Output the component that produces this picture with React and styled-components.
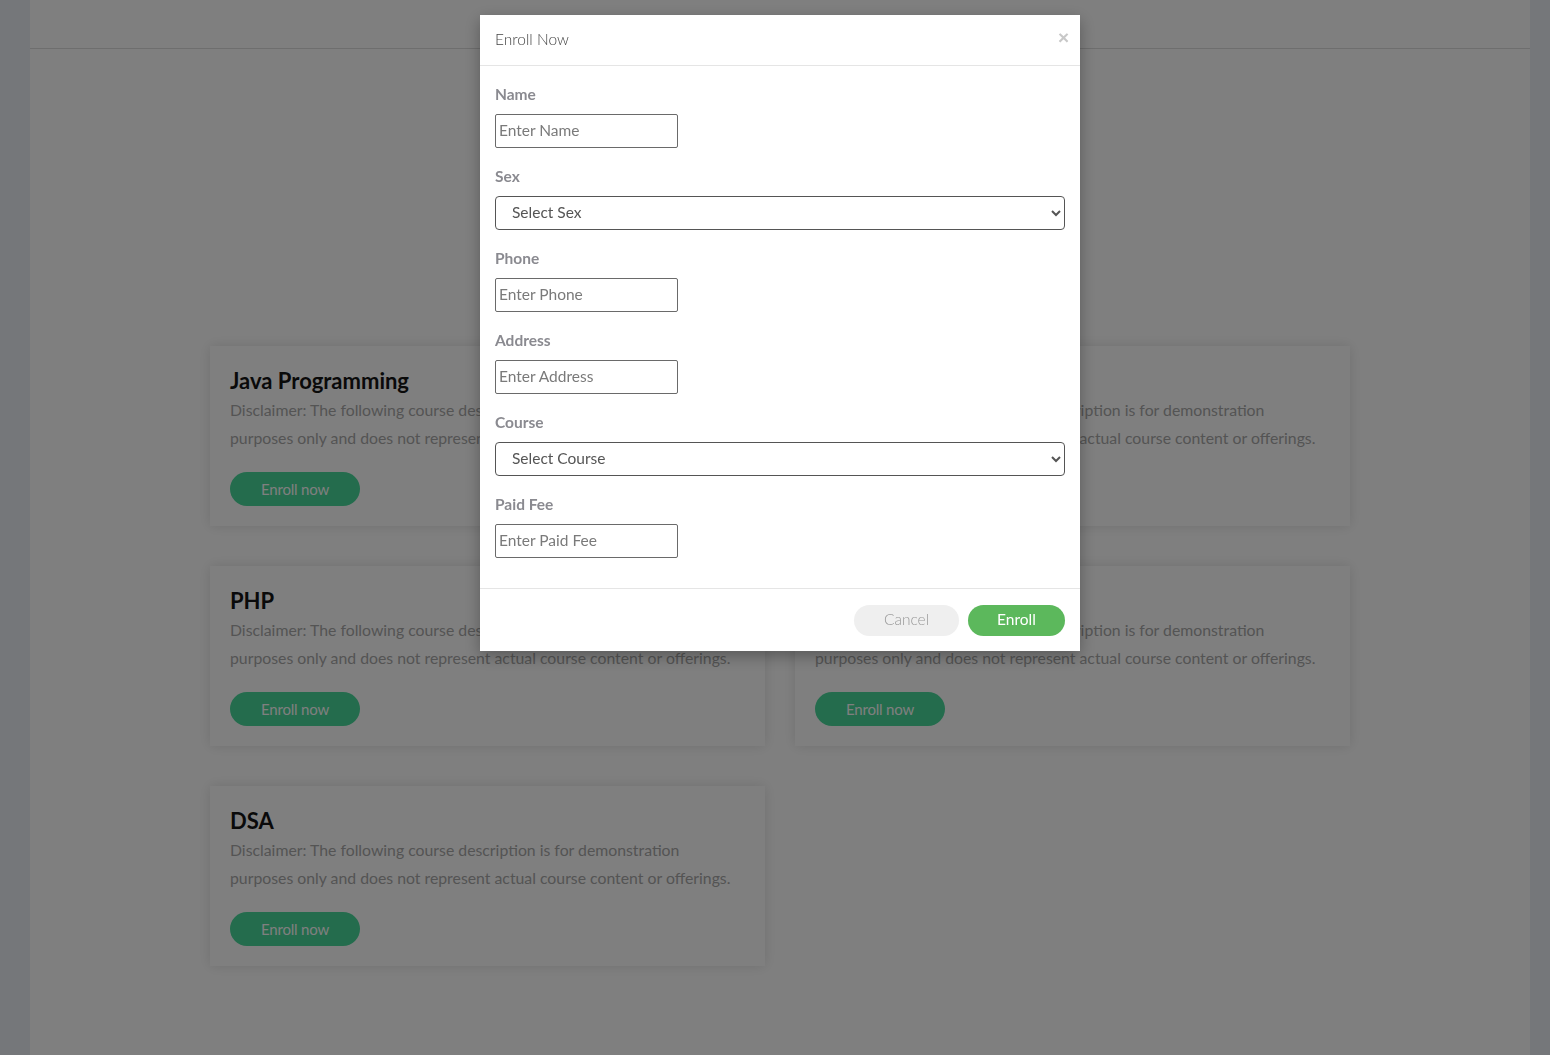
import React from "react";
import styled, { createGlobalStyle } from "styled-components";

//------------------------------- ESTILOS -------------------------

const GlobalStyle = createGlobalStyle`
  html, body {
    margin: 0;
    padding: 0;
  }
  body {
    background-color: #eaeef4;
    font-family: Lato, "Open Sans", Arial, sans-serif;
  }
  * {
    box-sizing: border-box;
  }
`;

const Page = styled.div`
  margin: 0 20px 0 30px;
  min-height: 100vh;
  background-color: #ffffff;
`;

const TopBar = styled.header`
  height: 49px;
  border-bottom: 1px solid #dcdcdc;
`;

const CourseGrid = styled.main`
  width: 1140px;
  margin: 297px auto 0;
  display: grid;
  grid-template-columns: 555px 555px;
  column-gap: 30px;
  row-gap: 40px;
  padding-bottom: 60px;
`;

const Card = styled.div`
  background-color: #ffffff;
  padding: 20px;
  height: 180px;
  box-shadow: 0 0 12px rgba(0, 0, 0, 0.12);
`;

const CardTitle = styled.h2`
  margin: 0;
  font-size: 22px;
  line-height: 30px;
  font-weight: 700;
  color: #141414;
`;

const CardText = styled.p`
  margin: 0;
  font-size: 15.8px;
  line-height: 28px;
  color: #a8a8a8;
  white-space: nowrap;
`;

const EnrollNowButton = styled.button`
  margin-top: 20px;
  width: 130px;
  height: 34px;
  border: none;
  border-radius: 17px;
  background-color: #48d89a;
  color: #ffffff;
  font-family: inherit;
  font-size: 15px;
  letter-spacing: -0.2px;
  cursor: pointer;
`;

const Overlay = styled.div`
  position: fixed;
  inset: 0;
  background-color: rgba(0, 0, 0, 0.5);
  display: flex;
  justify-content: center;
  align-items: flex-start;
  padding: 15px 0 0 10px;
`;

const Modal = styled.div`
  width: 600px;
  background-color: #ffffff;
  box-shadow: 0 5px 15px rgba(0, 0, 0, 0.3);
`;

const ModalHeader = styled.div`
  display: flex;
  align-items: center;
  justify-content: space-between;
  padding: 15px;
  border-bottom: 1px solid #e5e5e5;
`;

const ModalTitle = styled.h4`
  margin: 0;
  font-size: 15.5px;
  line-height: 18px;
  padding-bottom: 2px;
  font-weight: 300;
  color: #444;
`;

const CloseButton = styled.button`
  border: none;
  background: none;
  padding: 0;
  margin: -6px -4px 0 0;
  font-family: Arial, sans-serif;
  font-size: 19px;
  line-height: 1;
  font-weight: 700;
  color: #c8c8c8;
  cursor: pointer;
`;

const ModalBody = styled.form`
  padding: 18px 15px 12px;
`;

const FormGroup = styled.div`
  margin-bottom: 18px;
`;

const Label = styled.label`
  display: block;
  font-size: 15.5px;
  line-height: 20px;
  font-weight: 700;
  color: #8a8a90;
  margin-bottom: 10px;
`;

const TextInput = styled.input`
  display: block;
  width: 183px;
  height: 34px;
  padding: 0 3px 2px;
  border: 1px solid #6a6a6a;
  border-radius: 2px;
  font-family: inherit;
  font-size: 15.5px;
  color: #333;
  &::placeholder {
    color: #7a7a7a;
  }
`;

const Select = styled.select`
  display: block;
  width: 100%;
  height: 34px;
  padding: 0 8px 2px 12px;
  border: 1px solid #555;
  border-radius: 4px;
  background-color: #ffffff;
  font-family: inherit;
  font-size: 15.5px;
  color: #555;
`;

const ModalFooter = styled.div`
  display: flex;
  justify-content: flex-end;
  gap: 9px;
  padding: 16px 15px 15px;
  border-top: 1px solid #e5e5e5;
`;

const PillButton = styled.button`
  height: 31px;
  width: ${(p) => (p.$primary ? "97px" : "105px")};
  padding: 0 0 3px;
  border: none;
  border-radius: 16px;
  background-color: ${(p) => (p.$primary ? "#5cb85c" : "#efefef")};
  color: ${(p) => (p.$primary ? "#ffffff" : "#999")};
  font-family: inherit;
  font-size: 15.5px;
  font-weight: ${(p) => (p.$primary ? 400 : 300)};
  cursor: pointer;
`;

//-------------------------------------------------------------------

const courses = ["Java Programming", "Python", "PHP", "C++", "DSA"];

const fields = [
  { label: "Name", placeholder: "Enter Name" },
  { label: "Sex", options: ["Select Sex", "Male", "Female"] },
  { label: "Phone", placeholder: "Enter Phone" },
  { label: "Address", placeholder: "Enter Address" },
  { label: "Course", options: ["Select Course", ...courses] },
  { label: "Paid Fee", placeholder: "Enter Paid Fee" },
];

export default function App() {
  return (
    <>
      <GlobalStyle />
      <Page>
        <TopBar />
        <CourseGrid>
          {courses.map((c) => (
            <Card key={c}>
              <CardTitle>{c}</CardTitle>
              <CardText>
                Disclaimer: The following course description is for demonstration
                <br />
                purposes only and does not represent actual course content or offerings.
              </CardText>
              <EnrollNowButton>Enroll now</EnrollNowButton>
            </Card>
          ))}
        </CourseGrid>
      </Page>

      <Overlay>
        <Modal>
          <ModalHeader>
            <ModalTitle>Enroll Now</ModalTitle>
            <CloseButton>×</CloseButton>
          </ModalHeader>
          <ModalBody>
            {fields.map((f) => (
              <FormGroup key={f.label}>
                <Label>{f.label}</Label>
                {f.options ? (
                  <Select defaultValue={f.options[0]}>
                    {f.options.map((o) => (
                      <option key={o}>{o}</option>
                    ))}
                  </Select>
                ) : (
                  <TextInput placeholder={f.placeholder} />
                )}
              </FormGroup>
            ))}
          </ModalBody>
          <ModalFooter>
            <PillButton type="button">Cancel</PillButton>
            <PillButton type="button" $primary>
              Enroll
            </PillButton>
          </ModalFooter>
        </Modal>
      </Overlay>
    </>
  );
}
